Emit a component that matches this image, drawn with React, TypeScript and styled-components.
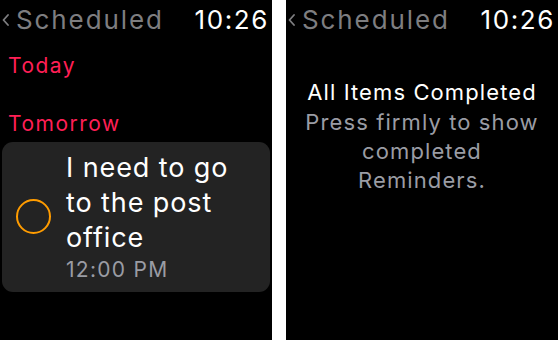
import styled, { createGlobalStyle } from 'styled-components';

const GlobalStyle = createGlobalStyle`
  html, body {
    margin: 0;
    padding: 0;
    background: #ffffff;
  }
  body {
    font-family: Inter, "Liberation Sans", sans-serif;
    -webkit-font-smoothing: antialiased;
  }
`;

const Page = styled.div`
  display: flex;
  gap: 14px;
  width: 558px;
  height: 340px;
  background: #ffffff;
  overflow: hidden;
`;

const Screen = styled.div`
  width: 272px;
  height: 340px;
  background: #000000;
  display: flex;
  flex-direction: column;
  overflow: hidden;
`;

const Header = styled.div`
  display: flex;
  align-items: center;
  height: 36px;
  padding: 2px 3px 0 2px;
  font-size: 26px;
  line-height: 36px;
`;

const BackTitle = styled.div`
  display: flex;
  align-items: center;
  gap: 7px;
  color: #7e7e80;
  letter-spacing: 1.9px;
`;

const Clock = styled.div`
  margin-left: auto;
  color: #ffffff;
  letter-spacing: 1.6px;
`;

const SectionLabel = styled.div<{ $gap: number }>`
  margin-top: ${({ $gap }) => $gap}px;
  padding-left: 8px;
  color: #ff1f55;
  font-size: 21px;
  line-height: 28px;
  letter-spacing: 1.5px;
`;

const Card = styled.div`
  display: flex;
  align-items: center;
  gap: 15px;
  margin: 4px 2px 0 2px;
  padding: 8px 10px 9px 14px;
  background: #232323;
  border-radius: 11px;
`;

const Check = styled.div`
  flex: none;
  width: 35px;
  height: 35px;
  box-sizing: border-box;
  border: 2px solid #ff9c00;
  border-radius: 50%;
`;

const ItemText = styled.div`
  display: flex;
  flex-direction: column;
  gap: 2px;
`;

const ItemTitle = styled.div`
  color: #ffffff;
  font-size: 27px;
  line-height: 35px;
  letter-spacing: 0.9px;
`;

const ItemTime = styled.div`
  color: #9a9ca4;
  font-size: 21px;
  line-height: 26px;
  letter-spacing: 1.3px;
`;

const Empty = styled.div`
  margin-top: 40px;
  text-align: center;
  font-size: 22px;
  line-height: 29px;
  letter-spacing: 1.1px;
`;

const EmptyTitle = styled.div`
  color: #ffffff;
`;

const EmptyHint = styled.div`
  margin-top: 1px;
  color: #9a9ca4;
`;

const Chevron = () => (
  <svg width="7" height="12" viewBox="0 0 7 12" fill="none">
    <path d="M6 1 L1.5 6 L6 11" stroke="#7e7e80" strokeWidth="1.8" strokeLinecap="round" strokeLinejoin="round" />
  </svg>
);

const WatchHeader = () => (
  <Header>
    <BackTitle>
      <Chevron />
      <span>Scheduled</span>
    </BackTitle>
    <Clock>10:26</Clock>
  </Header>
);

export default function App() {
  return (
    <Page>
      <GlobalStyle />
      <Screen>
        <WatchHeader />
        <SectionLabel $gap={14}>Today</SectionLabel>
        <SectionLabel $gap={30}>Tomorrow</SectionLabel>
        <Card>
          <Check />
          <ItemText>
            <ItemTitle>
              I need to go
              <br />
              to the post
              <br />
              office
            </ItemTitle>
            <ItemTime>12:00 PM</ItemTime>
          </ItemText>
        </Card>
      </Screen>
      <Screen>
        <WatchHeader />
        <Empty>
          <EmptyTitle>All Items Completed</EmptyTitle>
          <EmptyHint>
            Press firmly to show
            <br />
            completed
            <br />
            Reminders.
          </EmptyHint>
        </Empty>
      </Screen>
    </Page>
  );
}
